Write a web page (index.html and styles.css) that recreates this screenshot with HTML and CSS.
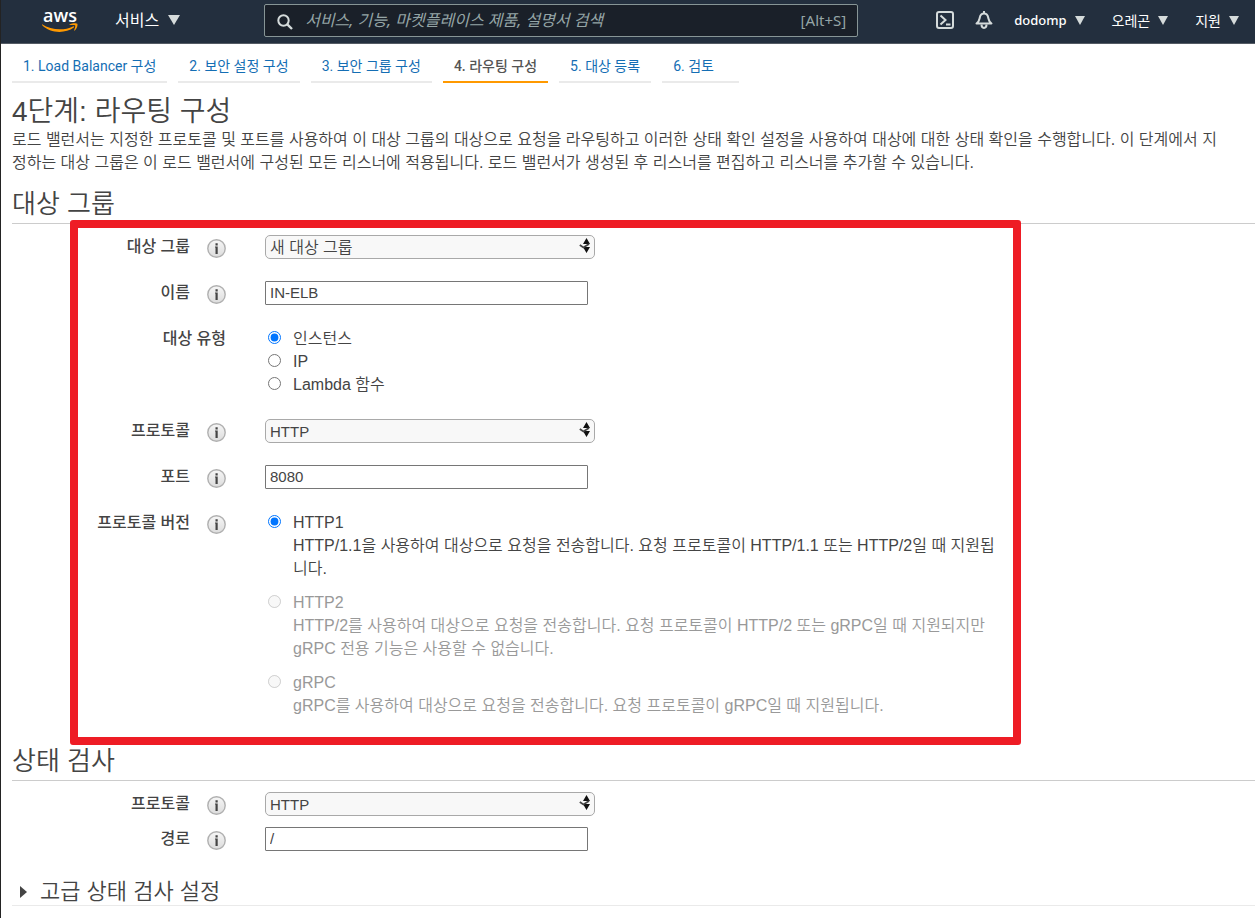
FILE: index.html
```html
<!DOCTYPE html>
<html lang="ko">
<head>
<meta charset="UTF-8">
<meta name="viewport" content="width=device-width, initial-scale=1.0">
<title>4단계: 라우팅 구성</title>
<link rel="stylesheet" href="styles.css">
</head>
<body>
<svg class="sprite" aria-hidden="true">
  <defs>
    <linearGradient id="infoFill" x1="0" y1="0" x2="0" y2="1">
      <stop offset="0" stop-color="#f6f6f6"/>
      <stop offset="1" stop-color="#dcdcdc"/>
    </linearGradient>
  </defs>
  <symbol id="info" viewBox="0 0 19 19">
    <circle cx="9.5" cy="9.5" r="8.7" fill="url(#infoFill)" stroke="#b0b0b0" stroke-width="1.4"/>
    <path d="M8.5 4.300h2.200v2.200H8.500zM8 7.600h2.700v7.400H8.500V8.600H8z" fill="#444"/>
  </symbol>
  <symbol id="arrows" viewBox="0 0 12 16">
    <path d="M7.5 0L11 6H4zM7.5 15L4 9h7z" fill="#111"/>
    <path d="M.8 7l3.6 2.4L10 6" fill="none" stroke="#444" stroke-width="1.8"/>
  </symbol>
</svg>

<header class="topbar">
  <a href="#" class="logo" aria-label="aws">
    <span class="logo-text">aws</span>
    <svg class="smile" viewBox="0 0 36 10">
      <path d="M0 1.2C9 7.2 22 8 31 3.4c1-.4 1.6.4.8 1.1C23 11 8 10.400 0 2z" fill="#f90"/>
      <path d="M27.500 1.400C30 0 34.500-.3 35.300.8c.7 1.200-.4 5-2.500 6.700-.4.3-.8.1-.6-.4.7-1.700 1.300-4 1-4.600-.4-.6-3.200-.5-5.200-.4-.6 0-.9-.3-.5-.7z" fill="#f90"/>
    </svg>
  </a>
  <button type="button" class="nav-button services">서비스 <span class="caret"></span></button>
  <form class="search">
    <svg class="search-icon" viewBox="0 0 16 16">
      <circle cx="6.500" cy="6.500" r="5.200" fill="none" stroke="#d5dbdb" stroke-width="2"/>
      <path d="M10.300 10.300L15 15" stroke="#d5dbdb" stroke-width="2.400"/>
    </svg>
    <input type="text" aria-label="검색" placeholder="서비스, 기능, 마켓플레이스 제품, 설명서 검색">
    <span class="shortcut">[Alt+S]</span>
  </form>
  <nav class="account">
    <button type="button" class="icon-button" aria-label="CloudShell">
      <svg width="18" height="18" viewBox="0 0 18 18" fill="none" stroke="#d5dbdb" stroke-width="2">
        <rect x="1" y="1" width="16" height="16" rx="2"/>
        <path d="M4.500 4.500L9.500 9l-5 4.500M10 13.500h4.500"/>
      </svg>
    </button>
    <button type="button" class="icon-button" aria-label="알림">
      <svg width="18" height="18" viewBox="0 0 18 18" fill="none" stroke="#d5dbdb" stroke-width="2">
        <path d="M9 0v2M1.500 12.500C4.300 10.500 4.300 9 4.800 6.500 5.300 3.800 6.800 2.500 9 2.500s3.700 1.300 4.200 4c.5 2.500.5 4 3.300 6z" stroke-linejoin="round"/>
        <path d="M6.500 13.500c0 4.500 5 4.500 5 0"/>
      </svg>
    </button>
    <button type="button" class="nav-button user">dodomp <span class="caret"></span></button>
    <button type="button" class="nav-button">오레곤 <span class="caret"></span></button>
    <button type="button" class="nav-button">지원 <span class="caret"></span></button>
  </nav>
</header>

<nav class="steps">
  <a href="#">1. Load Balancer 구성</a>
  <a href="#">2. 보안 설정 구성</a>
  <a href="#">3. 보안 그룹 구성</a>
  <a href="#" class="active">4. 라우팅 구성</a>
  <a href="#">5. 대상 등록</a>
  <a href="#" class="last">6. 검토</a>
</nav>

<main class="content">
  <h1>4단계: 라우팅 구성</h1>
  <p class="intro">로드 밸런서는 지정한 프로토콜 및 포트를 사용하여 이 대상 그룹의 대상으로 요청을 라우팅하고 이러한 상태 확인 설정을 사용하여 대상에 대한 상태 확인을 수행합니다. 이 단계에서 지<br>정하는 대상 그룹은 이 로드 밸런서에 구성된 모든 리스너에 적용됩니다. 로드 밸런서가 생성된 후 리스너를 편집하고 리스너를 추가할 수 있습니다.</p>

  <h2>대상 그룹</h2>
  <form class="fields highlighted">
    <div class="row">
      <div class="name"><label for="targetGroup">대상 그룹</label><svg class="info"><use href="#info"/></svg></div>
      <div class="select">
        <select id="targetGroup" class="korean"><option>새 대상 그룹</option></select>
        <svg class="arrows"><use href="#arrows"/></svg>
      </div>
    </div>
    <div class="row">
      <div class="name"><label for="groupName">이름</label><svg class="info"><use href="#info"/></svg></div>
      <input type="text" class="text" id="groupName" value="IN-ELB">
    </div>
    <div class="row" role="radiogroup" aria-labelledby="typeLabel">
      <div class="name"><span id="typeLabel">대상 유형</span></div>
      <div class="options">
        <label class="option"><input type="radio" name="type" checked> 인스턴스</label>
        <label class="option"><input type="radio" name="type"> IP</label>
        <label class="option"><input type="radio" name="type"> Lambda 함수</label>
      </div>
    </div>
    <div class="row">
      <div class="name"><label for="protocol">프로토콜</label><svg class="info"><use href="#info"/></svg></div>
      <div class="select">
        <select id="protocol"><option>HTTP</option></select>
        <svg class="arrows"><use href="#arrows"/></svg>
      </div>
    </div>
    <div class="row">
      <div class="name"><label for="port">포트</label><svg class="info"><use href="#info"/></svg></div>
      <input type="text" class="text" id="port" value="8080">
    </div>
    <div class="row" role="radiogroup" aria-labelledby="versionLabel">
      <div class="name"><span id="versionLabel">프로토콜 버전</span><svg class="info"><use href="#info"/></svg></div>
      <div class="options versions">
        <div>
          <label class="option"><input type="radio" name="version" checked> HTTP1</label>
          <p>HTTP/1.1을 사용하여 대상으로 요청을 전송합니다. 요청 프로토콜이 HTTP/1.1 또는 HTTP/2일 때 지원됩니다.</p>
        </div>
        <div class="disabled">
          <label class="option"><input type="radio" name="version" disabled> HTTP2</label>
          <p>HTTP/2를 사용하여 대상으로 요청을 전송합니다. 요청 프로토콜이 HTTP/2 또는 gRPC일 때 지원되지만 gRPC 전용 기능은 사용할 수 없습니다.</p>
        </div>
        <div class="disabled">
          <label class="option"><input type="radio" name="version" disabled> gRPC</label>
          <p>gRPC를 사용하여 대상으로 요청을 전송합니다. 요청 프로토콜이 gRPC일 때 지원됩니다.</p>
        </div>
      </div>
    </div>
  </form>

  <h2>상태 검사</h2>
  <form class="fields compact">
    <div class="row">
      <div class="name"><label for="checkProtocol">프로토콜</label><svg class="info"><use href="#info"/></svg></div>
      <div class="select">
        <select id="checkProtocol"><option>HTTP</option></select>
        <svg class="arrows"><use href="#arrows"/></svg>
      </div>
    </div>
    <div class="row">
      <div class="name"><label for="path">경로</label><svg class="info"><use href="#info"/></svg></div>
      <input type="text" class="text" id="path" value="/">
    </div>
  </form>

  <details class="advanced">
    <summary>고급 상태 검사 설정</summary>
  </details>
</main>
</body>
</html>
```
FILE: styles.css
```css
*,
*::before,
*::after {
  box-sizing: border-box;
}
body {
  margin: 0;
  min-height: 100vh;
  border-left: 1px solid #232323;
  background: #fff;
  color: #444;
  font-family: "Liberation Sans", "Noto Sans CJK KR", sans-serif;
  font-size: 16px;
  font-weight: 350;
  line-height: 23px;
  overflow-x: hidden;
}
button,
input,
select {
  font: inherit;
  color: inherit;
}
.sprite {
  position: absolute;
  width: 0;
  height: 0;
}

/* Top bar */
.topbar {
  display: flex;
  align-items: center;
  height: 44px;
  padding: 0 16px 3px 41px;
  background: #232f3e;
  border-bottom: 1px solid #545b64;
  color: #fff;
  font-family: "Noto Sans", "Noto Sans CJK KR", sans-serif;
  font-weight: 400;
}
.logo {
  display: flex;
  flex-direction: column;
  align-items: center;
  width: 36px;
  color: #fff;
  text-decoration: none;
}
.logo-text {
  font-family: "Open Sans", sans-serif;
  font-size: 18px;
  font-weight: 600;
  line-height: 16px;
}
.smile {
  width: 36px;
  height: 10px;
}
.nav-button {
  display: flex;
  align-items: center;
  gap: 8px;
  padding: 0;
  border: 0;
  background: none;
  font-size: 14px;
  cursor: pointer;
}
.caret {
  border: 5px solid transparent;
  border-top: 9px solid #d5dbdb;
  border-bottom: 0;
}
.services {
  gap: 9px;
  margin-left: 37px;
  font-size: 16px;
}
.services .caret {
  border-width: 10px 6px 0;
}
.search {
  display: flex;
  align-items: center;
  flex: 0 1 594px;
  height: 33px;
  margin: 0 auto 0 84px;
  padding: 0 11px 0 12px;
  border: 1px solid #879596;
  border-radius: 2px;
  background: #1a2029;
  color: #95a5a6;
}
.search-icon {
  flex: none;
  width: 16px;
  height: 16px;
  margin-top: 4px;
}
.search input {
  flex: 1;
  min-width: 0;
  padding: 0 12px;
  border: 0;
  outline: 0;
  background: none;
}
.search input::placeholder {
  color: #95a5a6;
  font-style: italic;
}
.shortcut {
  font-size: 15px;
}
.account {
  display: flex;
  align-items: center;
  gap: 27px;
}
.icon-button {
  display: flex;
  margin-right: -6px;
  padding: 0;
  border: 0;
  background: none;
  cursor: pointer;
}
.user {
  font-size: 13px;
  font-weight: 500;
}

/* Wizard steps */
.steps {
  display: flex;
  gap: 11px;
  padding: 9px 11px 0;
  font-family: Roboto, "Noto Sans CJK KR", sans-serif;
  font-size: 14px;
  font-weight: 400;
}
.steps a {
  height: 30px;
  padding: 2px 11px 0;
  border-bottom: 2px solid #eaeaea;
  color: #146eb4;
  text-decoration: none;
  white-space: nowrap;
}
.steps .active {
  border-color: #ff9900;
  color: #555;
  font-weight: 500;
}
.steps .last {
  padding-right: 25px;
}

/* Content */
.content {
  padding-left: 11px;
}
h1,
h2 {
  margin: 0;
  font-size: 26px;
  font-weight: 350;
  line-height: 32px;
}
h1 {
  padding-top: 13px;
  font-size: 28px;
}
h2 {
  height: 36px;
  border-bottom: 1px solid #ccc;
}
.intro {
  margin: 0 0 14px;
  white-space: nowrap;
}
.fields {
  display: flex;
  flex-direction: column;
  gap: 22px;
  padding: 11px 0 27px;
}
.row {
  display: grid;
  grid-template-columns: 214px 1fr;
  column-gap: 39px;
  min-height: 24px;
}
.name {
  display: flex;
  justify-content: flex-end;
  gap: 17px;
  font-weight: 500;
}
.info {
  width: 19px;
  height: 19px;
  margin-top: 4px;
}
.select {
  position: relative;
  width: 330px;
}
.select select {
  display: block;
  width: 100%;
  height: 24px;
  padding: 0 4px 2px;
  appearance: none;
  border: 1px solid #a9a9a9;
  border-radius: 5px;
  background: #f8f8f8;
}
.arrows {
  position: absolute;
  top: 3px;
  right: 4px;
  width: 12px;
  height: 16px;
  pointer-events: none;
}
.text {
  width: 323px;
  height: 24px;
  padding: 0 4px 2px;
  border: 1px solid #767676;
  border-radius: 1px;
}
.text,
select {
  font-size: 15px;
}
.korean {
  font-size: 16px;
}
.options {
  padding-bottom: 1px;
}
.option {
  display: flex;
  align-items: flex-start;
  gap: 12px;
}
.option input {
  margin: 4px 0 0 3px;
}
.versions {
  display: flex;
  flex-direction: column;
  gap: 11px;
  max-width: 740px;
}
.versions p {
  margin: 0;
  padding-left: 28px;
}
.disabled {
  color: #999;
}

/* Red frame over the target group form */
.highlighted {
  position: relative;
}
.highlighted::after {
  content: "";
  position: absolute;
  top: -4px;
  bottom: 0;
  left: 58px;
  width: 951px;
  border: 8px solid #ee1c25;
  border-radius: 3px;
  pointer-events: none;
}
.compact {
  gap: 11px;
}
.advanced summary {
  display: flex;
  align-items: center;
  gap: 13px;
  height: 28px;
  padding-left: 8px;
  border-bottom: 1px solid #eaeaea;
  font-size: 22px;
  cursor: pointer;
}
.advanced summary::before {
  content: "";
  border-left: 7px solid #444;
  border-top: 6px solid transparent;
  border-bottom: 6px solid transparent;
}
```
